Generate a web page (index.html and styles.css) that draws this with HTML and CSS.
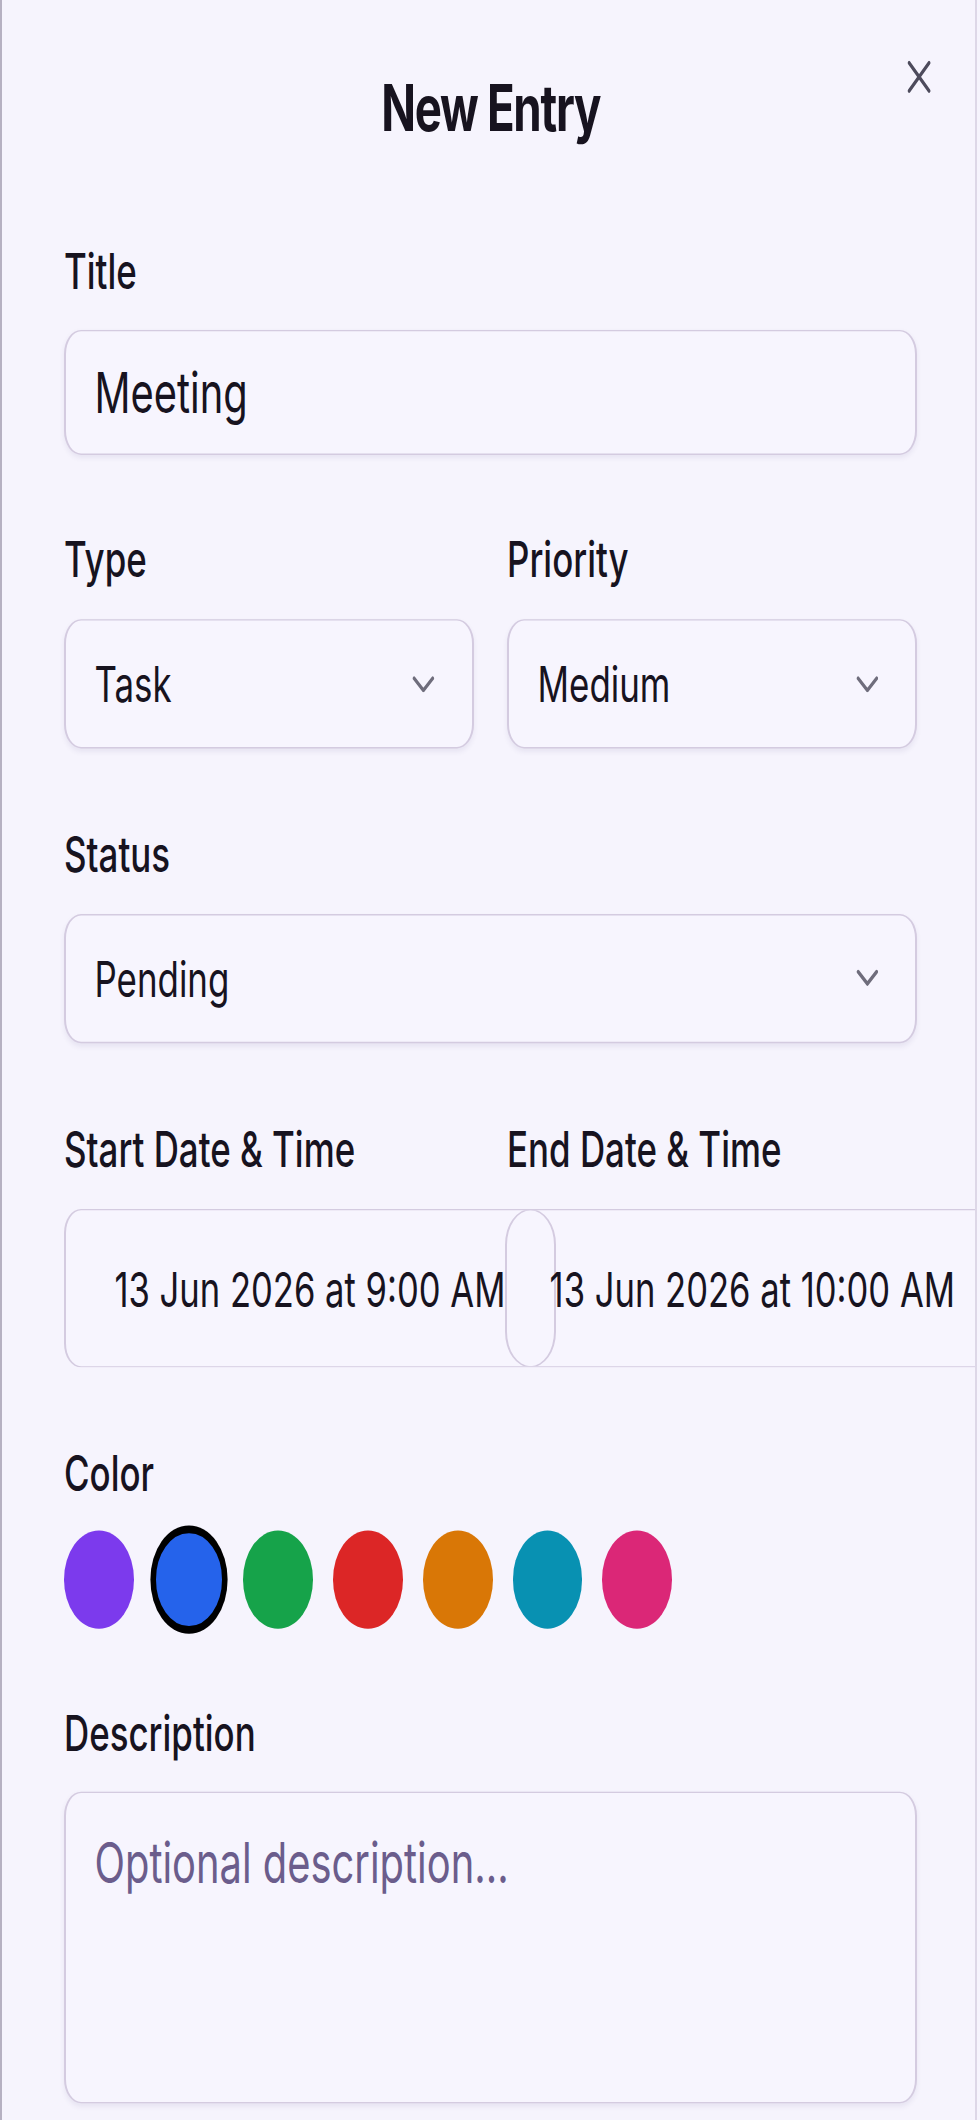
FILE: index.html
```html
<!DOCTYPE html>
<html lang="en">
<head>
<meta charset="utf-8">
<title>New Entry</title>
<link rel="stylesheet" href="styles.css">
</head>
<body>
<div class="stage">
  <div class="sheet">
    <h1 class="title">New Entry</h1>
    <svg class="close" viewBox="0 0 34 33" width="24.2" height="23.5" aria-label="Close">
      <path d="M3 2.5 31 30.5M31 2.5 3 30.5" fill="none" stroke="#4d4b5c" stroke-width="4" stroke-linecap="round"/>
    </svg>

    <div class="field">
      <span class="label">Title</span>
      <div class="box input">Meeting</div>
    </div>

    <div class="row2 field">
      <div>
        <span class="label">Type</span>
        <div class="box select"><span>Task</span>
          <svg class="chev" viewBox="0 0 32 18" width="22.8" height="12.8"><path d="M3 3 16 15 29 3" fill="none" stroke="#6f6d7c" stroke-width="4" stroke-linecap="round" stroke-linejoin="round"/></svg>
        </div>
      </div>
      <div>
        <span class="label">Priority</span>
        <div class="box select"><span>Medium</span>
          <svg class="chev" viewBox="0 0 32 18" width="22.8" height="12.8"><path d="M3 3 16 15 29 3" fill="none" stroke="#6f6d7c" stroke-width="4" stroke-linecap="round" stroke-linejoin="round"/></svg>
        </div>
      </div>
    </div>

    <div class="field field-lg">
      <span class="label">Status</span>
      <div class="box select"><span>Pending</span>
        <svg class="chev" viewBox="0 0 32 18" width="22.8" height="12.8"><path d="M3 3 16 15 29 3" fill="none" stroke="#6f6d7c" stroke-width="4" stroke-linecap="round" stroke-linejoin="round"/></svg>
      </div>
    </div>

    <div class="field field-lg">
      <div class="row2">
        <span class="label">Start Date &amp; Time</span>
        <span class="label">End Date &amp; Time</span>
      </div>
      <div class="date-field">
        <span class="dt-start">13 Jun 2026 at 9:00 AM</span>
        <span class="dt-pill"></span>
        <span class="dt-end">13 Jun 2026 at 10:00 AM</span>
      </div>
    </div>

    <div class="field field-color">
      <span class="label">Color</span>
      <div class="swatches">
        <span class="swatch c-violet"></span>
        <span class="swatch c-blue sel"></span>
        <span class="swatch c-green"></span>
        <span class="swatch c-red"></span>
        <span class="swatch c-amber"></span>
        <span class="swatch c-cyan"></span>
        <span class="swatch c-pink"></span>
      </div>
    </div>

    <div class="field field-last">
      <span class="label">Description</span>
      <div class="box textarea">Optional description...</div>
    </div>
  </div>
</div>
</body>
</html>
```

FILE: styles.css
```css
* { box-sizing: border-box; }

html {
  margin: 0;
  padding: 0;
  background: #f6f4fd;
  overflow: hidden;
}

body {
  margin: 0;
  padding: 0;
  min-height: 2120px;
  font-family: Inter, "Noto Sans", "Liberation Sans", sans-serif;
  color: #17131f;
}

/* the reference is rendered stretched vertically */
.stage {
  width: 980px;
  transform: scaleY(1.4041);
  transform-origin: 0 0;
}

.sheet {
  position: relative;
  width: 977px;
  height: 1510px;
  border-left: 2px solid #b6b1c2;
  border-right: 2px solid #ddd7e7;
  background: #f6f4fd;
  padding: 54.1px 57.7px 0 62px;
  overflow: hidden;
}

.title {
  margin: 0 0 75.85px;
  font-size: 45.6px;
  line-height: 45.6px;
  font-weight: 700;
  text-align: center;
  letter-spacing: -1.28px;
}

.close {
  position: absolute;
  top: 43.4px;
  right: 43.4px;
  display: block;
}

.field { margin-bottom: 57.33px; }
.field-lg { margin-bottom: 58.4px; }
.field-color { margin-bottom: 56.98px; }
.field-last { margin-bottom: 0; }

.label {
  display: block;
  font-size: 34.9px;
  line-height: 34.19px;
  font-weight: 500;
  margin-bottom: 25.64px;
}

.row2 {
  display: grid;
  grid-template-columns: 1fr 1fr;
  column-gap: 32.76px;
}

.box {
  display: flex;
  align-items: center;
  border: solid #d4cbe0;
  border-width: 1px 2px;
  border-radius: 17.1px;
  background: #f7f5fe;
  box-shadow: 0 2.1px 4.3px rgba(70, 50, 110, 0.08);
  white-space: nowrap;
}

.input {
  height: 88.31px;
  padding: 0 28.5px;
  font-size: 39.88px;
}

.select {
  height: 92.59px;
  padding: 0 37px 0 28.5px;
  font-size: 34.9px;
  justify-content: space-between;
}

.chev { display: block; flex: none; }

.date-field {
  display: flex;
  align-items: center;
  height: 112.53px;
  margin-right: -57.7px;
  border: solid #d4cbe0;
  border-width: 1px 0 1px 2px;
  border-radius: 17.1px 0 0 17.1px;
  background: #f7f5fe;
  font-size: 34.6px;
  white-space: nowrap;
  overflow: hidden;
}

.dt-start {
  flex: none;
  width: 439.4px;
  text-align: right;
}

.dt-pill {
  flex: none;
  width: 50.6px;
  align-self: stretch;
  margin: -1px 0;
  border: solid #d4cbe0;
  border-width: 1px 2px;
  border-radius: 999px;
}

.dt-end { margin-left: -6.4px; }

.swatches {
  display: flex;
  gap: 19.94px;
  margin-top: -2.14px;
}

.swatch {
  flex: none;
  width: 69.8px;
  height: 69.8px;
  border-radius: 50%;
}

.swatch.sel {
  border: 2px solid #000;
  box-shadow: 0 0 0 3.6px #000;
}

.c-violet { background: #7c3aed; }
.c-blue { background: #2563eb; }
.c-green { background: #16a34a; }
.c-red { background: #dc2626; }
.c-amber { background: #d97706; }
.c-cyan { background: #0891b2; }
.c-pink { background: #db2777; }

.textarea {
  height: 221.5px;
  align-items: flex-start;
  padding: 26.35px 28.5px;
  font-size: 39.88px;
  line-height: 46.29px;
  color: #6b5d8c;
}
```
